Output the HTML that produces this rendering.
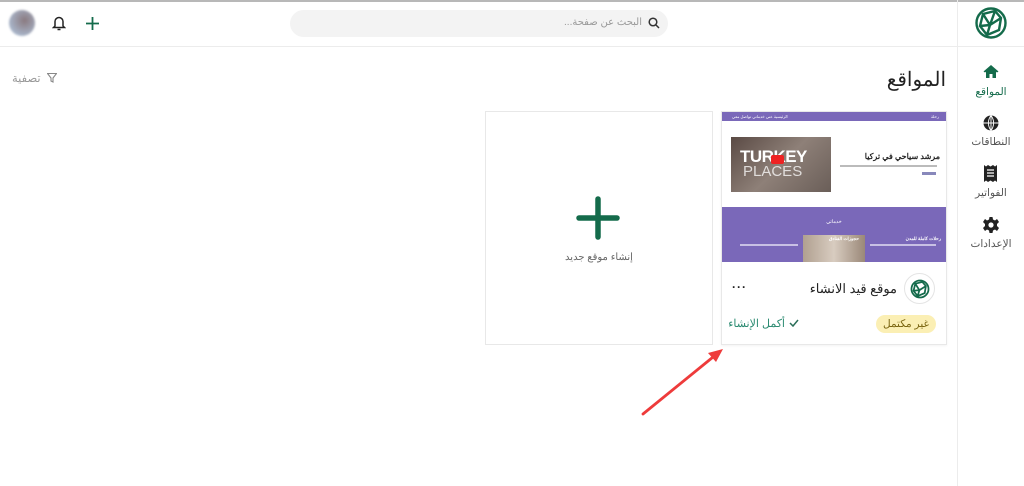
<!DOCTYPE html>
<html><head><meta charset="utf-8"><style>
*{margin:0;padding:0;box-sizing:border-box}
body{width:1024px;height:486px;overflow:hidden;background:#fff;font-family:"Liberation Sans","Noto Sans CJK SC",sans-serif;position:relative}
.a{position:absolute}
.t{direction:rtl;white-space:nowrap}
</style></head><body>
<div class="a" style="left:0;top:0;width:1024px;height:2px;background:#b8b8b8"></div>
<div class="a" style="left:0;top:46px;width:957px;height:1px;background:#ececec"></div>
<div class="a" style="left:957px;top:0;width:1px;height:486px;background:#ececec"></div>
<div class="a" style="left:958px;top:46px;width:66px;height:1px;background:#ececec"></div>
<svg class="a" style="left:974px;top:6px" width="34" height="34" viewBox="0 0 34 34" fill="none" stroke="#146b4b" stroke-width="2.4"><circle cx="17" cy="17" r="14.5"/><path d="M9 8 L21 5 L27 12 L25 24 L13 29 L6 20 Z M9 8 L16 19 L27 12 M16 19 L13 29 M6 20 L16 19 M21 5 L16 19"/></svg>
<svg class="a" style="left:983px;top:64px" width="16" height="15" viewBox="0 0 16 15"><path d="M8 1 L0.5 7.5 L2 8.5 L3 7.7 V14 H6.5 V10 H9.5 V14 H13 V7.7 L14 8.5 L15.5 7.5 Z" fill="#146b4b"/></svg>
<div class="a t" style="right:0;width:66px;top:86px;text-align:center;font-size:10.5px;color:#146b4b">المواقع</div>
<svg class="a" style="left:983px;top:115px" width="16" height="16" viewBox="0 0 16 16"><circle cx="8" cy="8" r="7.5" fill="#222"/><path d="M0.5 8H15.5M8 0.5V15.5M8 0.5C4.5 5 4.5 11 8 15.5M8 0.5C11.5 5 11.5 11 8 15.5" stroke="#fff" stroke-width="0.9" fill="none"/></svg>
<div class="a t" style="right:0;width:66px;top:136px;text-align:center;font-size:10.5px;color:#555">النطاقات</div>
<svg class="a" style="left:984px;top:165px" width="13" height="17" viewBox="0 0 13 17"><path d="M0 0 L2 1.5 L4 0 L6.5 1.5 L9 0 L11 1.5 L13 0 V17 L11 15.5 L9 17 L6.5 15.5 L4 17 L2 15.5 L0 17Z" fill="#222"/><path d="M3 5H10M3 8H10M3 11H10" stroke="#fff" stroke-width="1.3"/></svg>
<div class="a t" style="right:0;width:66px;top:187px;text-align:center;font-size:10.5px;color:#555">الفواتير</div>
<svg class="a" style="left:983px;top:217px" width="16" height="16" viewBox="0 0 16 16"><path d="M6.5 0H9.5L10 2.5L12 3.5L14 2L16 5L14 7V9L16 11L14 14L12 12.5L10 13.5L9.5 16H6.5L6 13.5L4 12.5L2 14L0 11L2 9V7L0 5L2 2L4 3.5L6 2.5Z" fill="#222"/><circle cx="8" cy="8" r="2.6" fill="#fff"/></svg>
<div class="a t" style="right:0;width:66px;top:238px;text-align:center;font-size:10.5px;color:#555">الإعدادات</div>
<div class="a" style="left:9px;top:10px;width:26px;height:26px;border-radius:50%;background:radial-gradient(circle at 60% 40%,#8a7a80,#a8b4c8 70%,#d8e0ec);filter:blur(1px)"></div>
<svg class="a" style="left:52px;top:15px" width="14" height="16" viewBox="0 0 14 16" fill="none" stroke="#222" stroke-width="1.5"><path d="M3 11V6.5a4 4 0 0 1 8 0V11L12.5 12.5H1.5Z"/><path d="M5.5 14.5h3"/></svg>
<svg class="a" style="left:86px;top:17px" width="13" height="13" viewBox="0 0 13 13" stroke="#146b4b" stroke-width="1.8"><path d="M6.5 0V13M0 6.5H13"/></svg>
<div class="a" style="left:290px;top:10px;width:378px;height:27px;border-radius:14px;background:#f3f3f3"></div>
<svg class="a" style="left:648px;top:17px" width="12" height="12" viewBox="0 0 12 12" fill="none" stroke="#333" stroke-width="1.5"><circle cx="5" cy="5" r="3.8"/><path d="M8 8L11 11"/></svg>
<div class="a t" style="right:382px;top:17px;font-size:10px;color:#999">البحث عن صفحة...</div>
<div class="a t" style="right:78px;top:67px;font-size:20px;color:#222">المواقع</div>
<svg class="a" style="left:47px;top:73px" width="10" height="10" viewBox="0 0 10 10" fill="none" stroke="#888" stroke-width="1.1"><path d="M0.5 0.5H9.5L6 5V9L4 8V5Z"/></svg>
<div class="a t" style="left:12px;top:71px;font-size:11.5px;color:#999">تصفية</div>
<div class="a" style="left:485px;top:111px;width:228px;height:234px;border:1px solid #e8e8e8"></div>
<svg class="a" style="left:576px;top:196px" width="44" height="44" viewBox="0 0 44 44" stroke="#146b4b" stroke-width="5.5" stroke-linecap="round"><path d="M22 3V41M3 22H41"/></svg>
<div class="a t" style="left:485px;width:228px;top:252px;text-align:center;font-size:10px;color:#666">إنشاء موقع جديد</div>
<div class="a" style="left:721px;top:111px;width:226px;height:234px;border:1px solid #e8e8e8;box-shadow:0 1px 2px rgba(0,0,0,.05)"></div>
<div class="a" style="left:722px;top:112px;width:224px;height:9px;background:#7a68b9"></div>
<div class="a" style="left:732px;top:114px;font-size:4px;color:#fff">الرئيسية عني خدماتي تواصل معي</div>
<div class="a" style="left:931px;top:114px;font-size:4px;color:#fff">رحلة</div>
<div class="a" style="left:731px;top:137px;width:100px;height:55px;background:linear-gradient(135deg,#5a4a44,#8e8078 50%,#6a5e58);overflow:hidden">
<div style="position:absolute;left:9px;top:10px;font-size:17px;font-weight:bold;color:#fff;letter-spacing:-.5px">TURKEY</div>
<div style="position:absolute;left:12px;top:26px;font-size:15px;color:rgba(255,255,255,.75)">PLACES</div>
<div style="position:absolute;left:40px;top:18px;width:13px;height:9px;background:#e22;border-radius:2px"></div>
</div>
<div class="a t" style="right:84px;top:152px;font-size:8px;font-weight:bold;color:#222">مرشد سياحي في تركيا</div>
<div class="a" style="left:840px;top:165px;width:97px;height:2px;background:#bbb"></div>
<div class="a" style="left:922px;top:172px;width:14px;height:3px;background:#8888bb"></div>
<div class="a" style="left:722px;top:207px;width:224px;height:55px;background:#7a68b9"></div>
<div class="a t" style="left:722px;width:224px;top:219px;text-align:center;font-size:5px;color:#fff">خدماتي</div>
<div class="a" style="left:803px;top:235px;width:62px;height:27px;background:linear-gradient(90deg,#b0a090,#d8ccc0,#9a8878)"></div>
<div class="a t" style="right:83px;top:236px;font-size:4.5px;color:#fff;font-weight:bold">رحلات كاملة للمدن</div>
<div class="a t" style="right:165px;top:236px;font-size:4.5px;color:#fff;font-weight:bold">حجوزات الفنادق</div>
<div class="a" style="left:870px;top:244px;width:66px;height:2px;background:#c8c0e4"></div>
<div class="a" style="left:740px;top:244px;width:58px;height:2px;background:#c8c0e4"></div>
<div class="a" style="left:904px;top:273px;width:31px;height:31px;border-radius:50%;border:1px solid #e4e4e4"></div>
<svg class="a" style="left:910px;top:279px" width="20" height="20" viewBox="0 0 34 34" fill="none" stroke="#146b4b" stroke-width="3"><circle cx="17" cy="17" r="14.5"/><path d="M9 8 L21 5 L27 12 L25 24 L13 29 L6 20 Z M9 8 L16 19 L27 12 M16 19 L13 29 M6 20 L16 19"/></svg>
<div class="a t" style="right:127px;top:281px;font-size:13px;color:#222">موقع قيد الانشاء</div>
<div class="a" style="left:732px;top:280px;font-size:12px;color:#222;font-weight:bold;letter-spacing:1px">···</div>
<div class="a t" style="right:88px;top:315px;padding:3px 7px;border-radius:9px;background:#fbefb4;font-size:10.5px;color:#7a6510">غير مكتمل</div>
<svg class="a" style="left:789px;top:319px" width="10" height="8" viewBox="0 0 10 8" fill="none" stroke="#2a6e58" stroke-width="1.5"><path d="M1 4L4 7L9 1"/></svg>
<div class="a t" style="right:239px;top:317px;font-size:11px;color:#2a8a70">أكمل الإنشاء</div>
<svg class="a" style="left:636px;top:340px" width="96" height="80" viewBox="0 0 96 80"><path d="M7 74L82 13" stroke="#ee3b3b" stroke-width="2.8" stroke-linecap="round"/><path d="M87 9L72 13L80 22Z" fill="#ee3b3b"/></svg>
</body></html>
